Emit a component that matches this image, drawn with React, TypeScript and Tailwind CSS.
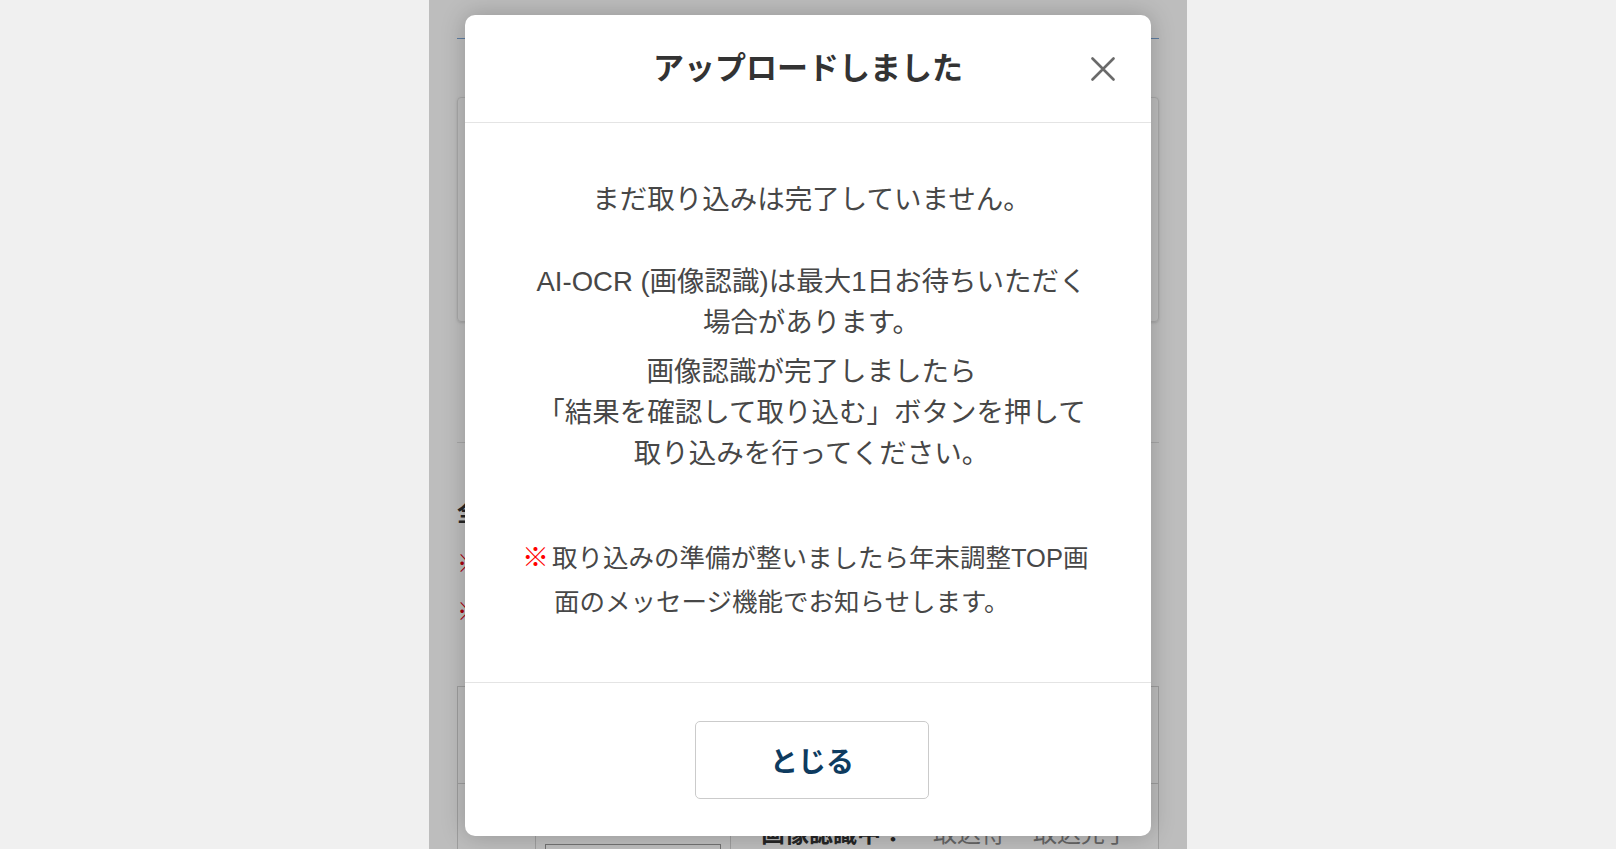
import React from 'react';

const jp = { fontFamily: '"Liberation Sans", "Noto Sans CJK JP", sans-serif' };

const CloseIcon = () => (
  <svg width="24" height="24" viewBox="0 0 24 24" fill="none">
    <path d="M1.5 1.5 L22.5 22.5 M22.5 1.5 L1.5 22.5" stroke="#6a6a6a" strokeWidth="2.6" strokeLinecap="round" />
  </svg>
);

// the page behind the dialog, mostly hidden by the overlay
const BehindPage = () => (
  <div className="flex flex-col">
    <div className="h-[38px]" />
    <div className="mx-[28px] h-px bg-[#7fa9da]" />
    <div className="h-[58px]" />
    <div className="mx-[28px] h-[225px] rounded border border-[#e3e3e3] shadow-sm" />
    <div className="h-[120px]" />
    <div className="mx-[28px] h-px bg-[#e2e2e2]" />
    <div className="mx-[28px] mt-[56px] text-[24px] font-bold leading-[28px] text-[#333]">全体の流れ</div>
    <div className="mx-[28px] mt-[13px] text-[24px] leading-[48px] text-[#333]">
      <p><span className="text-[#e60012]">※</span>ファイルをアップロードしてください</p>
      <p><span className="text-[#e60012]">※</span>画像認識には時間がかかります</p>
    </div>
    <div className="mx-[28px] mt-[50px] border border-[#d5d5d5]">
      <div className="h-[97px] border-b border-[#d5d5d5]" />
      <div className="flex h-[80px]">
        <div className="w-[78px] border-r border-[#d5d5d5]" />
        <div className="w-[195px] border-r border-[#d5d5d5] px-[9px] pt-[60px]">
          <div className="h-[20px] border border-[#999]" />
        </div>
        <div className="flex gap-[28px] pl-[30px] pt-[36px] text-[24px] leading-[28px]">
          <span className="font-bold text-[#333]">画像認識中：</span>
          <span className="text-[#888]">取込待</span>
          <span className="text-[#888]">取込完了</span>
        </div>
      </div>
    </div>
  </div>
);

export default function App() {
  return (
    <div className="flex h-[849px] justify-center overflow-hidden bg-[#f0f0f0]" style={jp}>
      <div className="relative h-[849px] w-[758px] overflow-hidden bg-white">
        <BehindPage />
        <div className="absolute inset-0 flex justify-center bg-black/[0.26] pt-[15px]">
          <div className="h-[821px] w-[686px] overflow-hidden rounded-[10px] bg-white shadow-[0_0_24px_rgba(0,0,0,0.22)]">
            {/* header */}
            <div className="relative flex h-[108px] items-center justify-center border-b border-[#e4e4e4]">
              <h2 className="text-[31px] font-bold leading-none text-[#333]">アップロードしました</h2>
              <button className="absolute right-[36px] top-[42px]">
                <CloseIcon />
              </button>
            </div>

            {/* body */}
            <div className="border-b border-[#e4e4e4] pb-[58px] pt-[56px] text-[#474747]">
              <p className="whitespace-nowrap pl-[7px] text-center text-[27.5px] leading-[41px]">
                まだ取り込みは完了していません。
                <br />
                <br />
                AI-OCR (画像認識)は最大1日お待ちいただく
                <br />
                場合があります。
              </p>
              <p className="mt-2 whitespace-nowrap pl-[7px] text-center text-[27.5px] leading-[41px]">
                画像認識が完了しましたら
                <br />
                「結果を確認して取り込む」ボタンを押して
                <br />
                取り込みを行ってください。
              </p>
              <div className="ml-[57px] mt-[62px] flex whitespace-nowrap text-[25.5px] leading-[44px]">
                <span className="w-[30px] shrink-0 text-[27px] font-bold text-[#ff0000]">※</span>
                <p>
                  取り込みの準備が整いましたら年末調整TOP画
                  <br />
                  <span className="pl-[2px]">面のメッセージ機能でお知らせします。</span>
                </p>
              </div>
            </div>

            {/* footer */}
            <div className="flex justify-center pl-[8px] pt-[38px]">
              <button className="h-[78px] w-[234px] rounded-[5px] border border-[#cbcbcb] bg-white pt-[5px] text-[28px] font-bold text-[#0e3b5f]">
                とじる
              </button>
            </div>
          </div>
        </div>
      </div>
    </div>
  );
}
